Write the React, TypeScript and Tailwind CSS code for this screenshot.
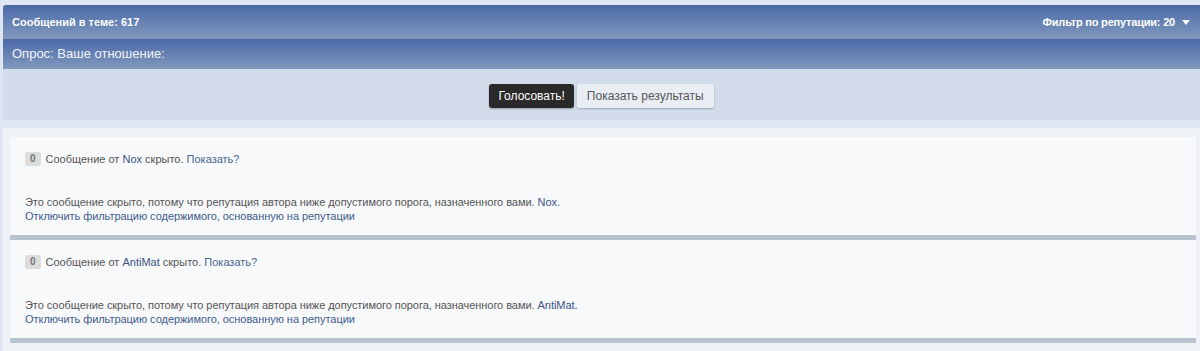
import React from "react";

const font = { fontFamily: '"Liberation Sans", Arial, sans-serif' };

function Post({ name }: { name: string }) {
  return (
    <div>
      <div className="bg-[#f8f9fb] px-[15px] pt-[15px] pb-[14px] h-[98px]">
        <div className="flex items-center text-[11px] text-[#555] h-[14px]">
          <span className="bg-[#dcdcdc] text-[#777] font-bold rounded-[2px] px-[5px] h-[14px] leading-[14px] text-[10px] mr-[5px]">0</span>
          <span>
            Сообщение от <span className="text-[#3b5283]">{name}</span> скрыто.{" "}
            <span className="text-[#4a6593]">Показать?</span>
          </span>
        </div>
        <div className="mt-[29px] text-[11px] leading-[14px] text-[#555] tracking-[-0.05px]">
          <div>
            Это сообщение скрыто, потому что репутация автора ниже допустимого порога, назначенного вами.{" "}
            <span className="text-[#3b5283]">{name}.</span>
          </div>
          <div className="text-[#3e5c8c]">Отключить фильтрацию содержимого, основанную на репутации</div>
        </div>
      </div>
      <div className="h-[5px] bg-[#b8c3cf]" />
    </div>
  );
}

export default function App() {
  return (
    <div className="w-[1200px] h-[351px] overflow-hidden bg-[#e0e5f3] pt-[5px]" style={font}>
      <div className="ml-[3px]">
        <div className="h-[34px] rounded-tl-[3px] bg-gradient-to-b from-[#4b69a7] to-[#8299be] flex items-center justify-between pl-[9px] pr-[10px] text-white text-[11px] font-bold">
          <span>Сообщений в теме: 617</span>
          <span className="flex items-center tracking-[-0.2px]">
            Фильтр по репутации: 20
            <svg width="8" height="5" viewBox="0 0 8 5" className="ml-[7px]">
              <path d="M0 0 L8 0 L4 5 Z" fill="#ffffff" />
            </svg>
          </span>
        </div>
        <div className="h-[30px] bg-gradient-to-b from-[#4b69a7] to-[#8299be] flex items-center pl-[9px] text-[#f2f5fa] text-[13px]">
          Опрос: Ваше отношение:
        </div>
        <div className="h-[51px] bg-[#d2dcea] flex items-center justify-center gap-[3px] pt-[2px]">
          <div className="h-[24px] px-[9px] rounded-[3px] bg-[#2a2a2a] text-white text-[12px] flex items-center shadow-[0_1px_2px_rgba(0,0,0,0.3)]">
            Голосовать!
          </div>
          <div className="h-[24px] px-[10px] rounded-[2px] bg-[#e9eef5] text-[#555] text-[12px] flex items-center shadow-[0_1px_2px_rgba(0,0,0,0.25)]">
            Показать результаты
          </div>
        </div>
      </div>
      <div className="h-[8px]" />
      <div className="ml-[3px] bg-[#eef1f6] pt-[9px] pl-[7px] pr-[4px] h-[300px]">
        <Post name="Nox" />
        <Post name="AntiMat" />
      </div>
    </div>
  );
}
